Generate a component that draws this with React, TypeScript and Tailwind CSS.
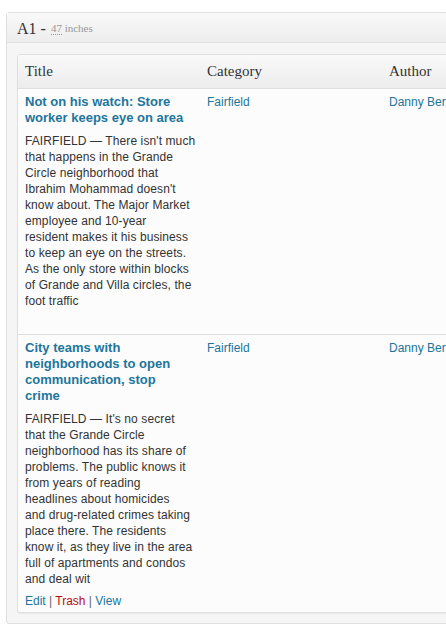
import React from "react";

const sans = { fontFamily: '"Liberation Sans", Arial, sans-serif' };
const serif = { fontFamily: '"Liberation Serif", Georgia, serif' };

function Row({
  title,
  lines,
  showActions,
  last,
}: {
  title: string;
  lines: string[];
  showActions: boolean;
  last?: boolean;
}) {
  const bb = last ? "" : "border-b border-[#dfdfdf]";
  return (
    <tr>
      <td className={`pl-[7px] pr-[6px] pt-[5px] pb-[3px] align-top ${bb}`}>
        <a className="block text-[13px] font-bold leading-[16px] text-[#21759b]">{title}</a>
        <div className="mt-[7px] text-[12px] leading-[16px] tracking-[0.1px] text-[#333]">
          {lines.map((l, i) => (
            <div key={i} className="whitespace-nowrap">
              {l}
            </div>
          ))}
        </div>
        <div
          className={`mt-[6px] text-[12px] leading-[16px] text-[#666] ${showActions ? "" : "invisible"}`}
        >
          <a className="text-[#21759b]">Edit</a> | <a className="text-[#bc0b0b]">Trash</a> |{" "}
          <a className="text-[#21759b]">View</a>
        </div>
      </td>
      <td className={`pl-[7px] pr-2 pt-[5px] align-top ${bb}`}>
        <a className="block text-[12px] leading-[16px] text-[#21759b]">Fairfield</a>
      </td>
      <td className={`pl-[7px] pr-2 pt-[5px] align-top whitespace-nowrap ${bb}`}>
        <a className="block text-[12px] leading-[16px] text-[#21759b]">Danny Bernstein</a>
      </td>
    </tr>
  );
}

export default function App() {
  const th =
    "h-[34px] border-b border-[#dfdfdf] pl-[7px] pr-2 text-left text-[15px] font-normal text-[#333]";
  return (
    <div className="w-[446px] h-[638px] overflow-hidden bg-white pt-[12px] pl-[6px]" style={sans}>
      <div className="w-[640px] rounded-[3px] border border-[#dfdfdf] bg-[#f5f5f5]">
        <div className="flex h-[30px] items-center border-b border-[#dfdfdf] bg-gradient-to-b from-[#f9f9f9] to-[#ededed] px-[10px] pt-[2px]">
          <span className="text-[16px] text-[#333]" style={serif}>
            A1 -
          </span>
          <span className="ml-[5px] text-[11px] text-[#999]" style={serif}>
            <abbr className="border-b border-dotted border-[#999] no-underline">47</abbr> inches
          </span>
        </div>
        <div className="px-[10px] pt-[11px] pb-[10px]">
          <table className="w-[620px] table-fixed border-separate border-spacing-0 rounded-[3px] border border-[#dfdfdf] bg-[#fcfcfc] shadow-[0_1px_1px_rgba(0,0,0,0.04)]">
            <colgroup>
              <col className="w-[182px]" />
              <col className="w-[182px]" />
              <col className="w-[256px]" />
            </colgroup>
            <thead>
              <tr className="bg-gradient-to-b from-[#f9f9f9] to-[#ececec]">
                <th className={th} style={serif}>
                  Title
                </th>
                <th className={th} style={serif}>
                  Category
                </th>
                <th className={th} style={serif}>
                  Author
                </th>
              </tr>
            </thead>
            <tbody>
              <Row
                title="Not on his watch: Store worker keeps eye on area"
                lines={[
                  "FAIRFIELD — There isn't much",
                  "that happens in the Grande",
                  "Circle neighborhood that",
                  "Ibrahim Mohammad doesn't",
                  "know about. The Major Market",
                  "employee and 10-year",
                  "resident makes it his business",
                  "to keep an eye on the streets.",
                  "As the only store within blocks",
                  "of Grande and Villa circles, the",
                  "foot traffic",
                ]}
                showActions={false}
              />
              <Row
                title="City teams with neighborhoods to open communication, stop crime"
                lines={[
                  "FAIRFIELD — It's no secret",
                  "that the Grande Circle",
                  "neighborhood has its share of",
                  "problems. The public knows it",
                  "from years of reading",
                  "headlines about homicides",
                  "and drug-related crimes taking",
                  "place there. The residents",
                  "know it, as they live in the area",
                  "full of apartments and condos",
                  "and deal wit",
                ]}
                showActions={true}
                last
              />
            </tbody>
          </table>
        </div>
      </div>
    </div>
  );
}
